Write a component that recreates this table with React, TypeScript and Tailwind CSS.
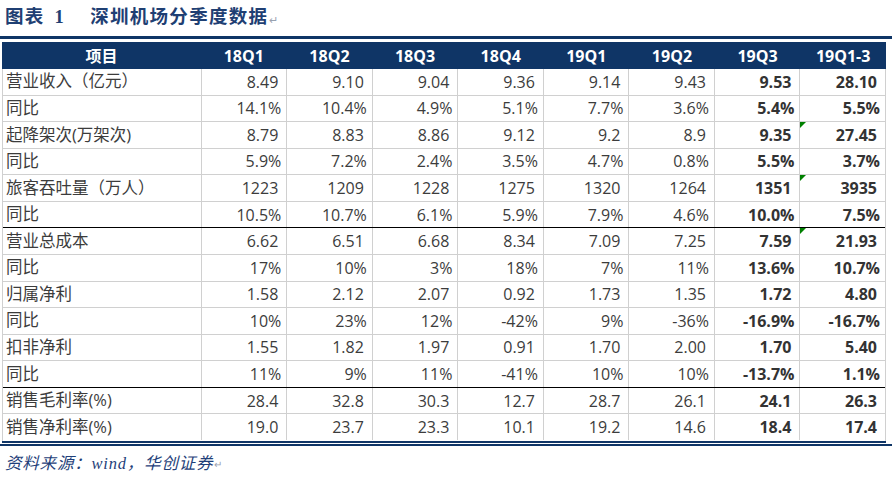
import React from "react";

const headers = ["18Q1", "18Q2", "18Q3", "18Q4", "19Q1", "19Q2", "19Q3", "19Q1-3"];

type Row = { label: string; vals: string[]; black?: boolean; tri?: boolean };

const rows: Row[] = [
  { label: "营业收入（亿元）", vals: ["8.49", "9.10", "9.04", "9.36", "9.14", "9.43", "9.53", "28.10"] },
  { label: "同比", vals: ["14.1%", "10.4%", "4.9%", "5.1%", "7.7%", "3.6%", "5.4%", "5.5%"] },
  { label: "起降架次(万架次)", vals: ["8.79", "8.83", "8.86", "9.12", "9.2", "8.9", "9.35", "27.45"], tri: true },
  { label: "同比", vals: ["5.9%", "7.2%", "2.4%", "3.5%", "4.7%", "0.8%", "5.5%", "3.7%"] },
  { label: "旅客吞吐量（万人）", vals: ["1223", "1209", "1228", "1275", "1320", "1264", "1351", "3935"], tri: true },
  { label: "同比", vals: ["10.5%", "10.7%", "6.1%", "5.9%", "7.9%", "4.6%", "10.0%", "7.5%"], black: true },
  { label: "营业总成本", vals: ["6.62", "6.51", "6.68", "8.34", "7.09", "7.25", "7.59", "21.93"], tri: true },
  { label: "同比", vals: ["17%", "10%", "3%", "18%", "7%", "11%", "13.6%", "10.7%"] },
  { label: "归属净利", vals: ["1.58", "2.12", "2.07", "0.92", "1.73", "1.35", "1.72", "4.80"] },
  { label: "同比", vals: ["10%", "23%", "12%", "-42%", "9%", "-36%", "-16.9%", "-16.7%"] },
  { label: "扣非净利", vals: ["1.55", "1.82", "1.97", "0.91", "1.70", "2.00", "1.70", "5.40"] },
  { label: "同比", vals: ["11%", "9%", "11%", "-41%", "10%", "10%", "-13.7%", "1.1%"], black: true },
  { label: "销售毛利率(%)", vals: ["28.4", "32.8", "30.3", "12.7", "28.7", "26.1", "24.1", "26.3"] },
  { label: "销售净利率(%)", vals: ["19.0", "23.7", "23.3", "10.1", "19.2", "14.6", "18.4", "17.4"] },
];

const cellFont = { fontFamily: '"Open Sans", "Noto Sans CJK SC", sans-serif' };

export default function App() {
  return (
    <div className="w-[892px] h-[479px] bg-white relative overflow-hidden">
      <div
        className="h-[36px] pl-[5px] flex items-center text-[18.5px] font-bold text-[#1f3f73] tracking-[1.3px]"
        style={{ fontFamily: '"Liberation Serif", "Noto Sans CJK SC", serif' }}
      >
        <span>图表</span>
        <span className="ml-[10px]">1</span>
        <span className="ml-[25px]">深圳机场分季度数据</span>
        <span className="ml-[1px] text-[11px] font-normal text-gray-400 self-end mb-[8px]">↵</span>
      </div>
      <div className="h-[3px] bg-[#0f3566]" />
      <div className="h-[3px]" />
      <div className="ml-[2px] w-[884px]" style={cellFont}>
        <div className="h-[27px] bg-[#0f3566] flex text-white font-bold text-[16px]">
          <div className="w-[199px] flex items-center justify-center">项目</div>
          {headers.map((h) => (
            <div key={h} className="w-[85.625px] flex items-center justify-center">
              {h}
            </div>
          ))}
        </div>
        <div className="border-l border-r border-[#d0d0d0]">
          {rows.map((r, i) => (
            <div
              key={i}
              className={`h-[26.57px] flex text-[16px] text-[#3c3c3c] border-b ${
                r.black ? "border-black" : i === rows.length - 1 ? "border-transparent" : "border-[#d0d0d0]"
              }`}
            >
              <div className="w-[198px] flex items-center pl-[3px] text-[16.5px] whitespace-nowrap">{r.label}</div>
              {r.vals.map((v, j) => (
                <div
                  key={j}
                  className={`relative w-[85.625px] border-l border-[#d0d0d0] flex items-center justify-end ${
                    v.endsWith("%") ? "pr-[5px]" : "pr-[8px]"
                  } ${j >= 6 ? "font-bold text-[#333]" : ""}`}
                >
                  {r.tri && j === 7 && (
                    <svg className="absolute left-0 top-0" width="6" height="6" viewBox="0 0 6 6">
                      <polygon points="0,0 6,0 0,6" fill="#008000" />
                    </svg>
                  )}
                  {v}
                </div>
              ))}
            </div>
          ))}
        </div>
        <div className="h-[2px] bg-[#0f3566]" />
      </div>
      <div className="h-[1px]" />
      <div className="h-[2px] bg-[#0f3566]" />
      <div
        className="pl-[5px] pt-[6px] text-[16.5px] italic text-[#1f3f7a] flex items-center tracking-[0.8px]"
        style={{ fontFamily: '"Liberation Serif", "Noto Sans CJK SC", serif' }}
      >
        <span>资料来源：wind，华创证券</span>
        <span className="ml-[1px] text-[10px] not-italic text-gray-400">↵</span>
      </div>
    </div>
  );
}
